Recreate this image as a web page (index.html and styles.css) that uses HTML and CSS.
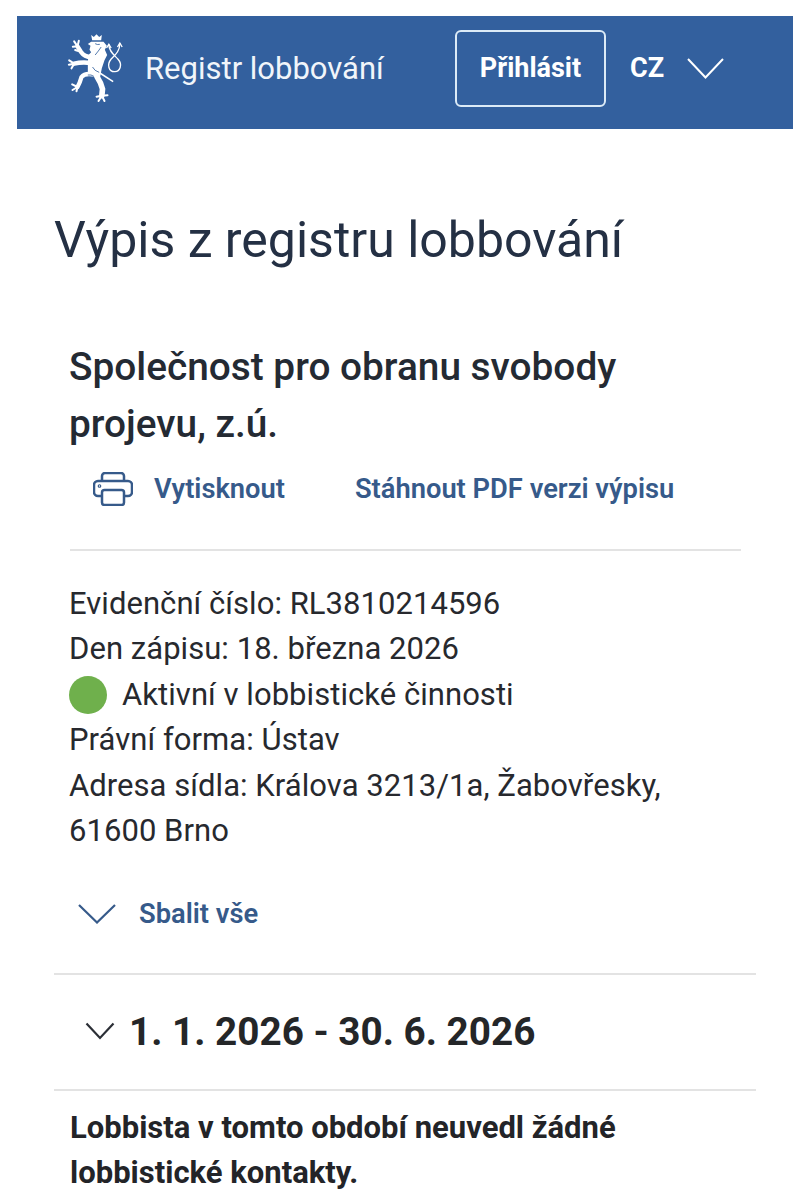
FILE: index.html
```html
<!DOCTYPE html>
<html lang="cs">
<head>
<meta charset="utf-8">
<title>Registr lobbování</title>
<link rel="stylesheet" href="styles.css">
</head>
<body>
<header class="topbar">
  <div class="brand">
    <svg class="lion" viewBox="200 100 170 210" aria-hidden="true">
      <path class="fillw" d="M272 106l8 6 8-8 8 8 8-6-2 16h-27z"/>
      <path class="fillw" d="M272 126l-10 7 8 5-3 12 5 8-8 8-2 20 0 36 36 14 6-30 8-24 8-16-7-16 6-12-10-12z"/>
      <g class="limb">
        <path d="M272 172Q252 172 241 156L231 140"/>
        <path d="M272 190Q244 186 221 192"/>
        <path d="M286 226Q254 218 243 232Q238 250 231 262"/>
        <path stroke-width="17" d="M290 232Q302 250 306 268L304 288"/>
      </g>
      <g class="claw">
        <path d="M231 140 221 125M231 140 235 123M231 140 217 141M241 156 224 151"/>
        <path d="M221 192 206 182M221 192 205 195M221 192 213 206"/>
        <path d="M231 262 215 254M231 262 216 271M231 262 228 275"/>
        <path d="M304 288 288 291M304 288 294 304M304 288 312 304M304 288 321 287"/>
      </g>
      <g class="tail">
        <path stroke-width="4.500" d="M298 220 338 246"/>
        <path d="M325 134C325 155 340 165 352 178C368 195 358 217 342 216C325 216 318 195 332 178C345 165 358 155 358 130"/>
        <path d="M318 145 325 134 332 145M351 142 358 130 365 142"/>
      </g>
      <path class="mark" d="M284 166Q294 154 302 142M276 202Q282 214 296 218M262 226Q272 224 280 230M284 132Q290 136 298 134"/>
    </svg>
    <span class="brand-name">Registr lobbování</span>
  </div>
  <a class="login">Přihlásit</a>
  <span class="lang">CZ</span>
  <svg class="lang-chevron" viewBox="0 0 37 21" aria-hidden="true"><path d="M1 1 18.500 19.500 36 1"/></svg>
</header>

<main class="page">
  <h1 class="title">Výpis z registru lobbování</h1>

  <section class="summary">
    <h2 class="org">Společnost pro obranu svobody<br>projevu, z.ú.</h2>
    <div class="actions">
      <a class="action print">
        <svg class="printer" viewBox="0 0 40 34" aria-hidden="true">
          <path d="M9 9V4a3 3 0 0 1 3-3h16a3 3 0 0 1 3 3v5"/>
          <path d="M9 24H5a4 4 0 0 1-4-4v-7a4 4 0 0 1 4-4h30a4 4 0 0 1 4 4v7a4 4 0 0 1-4 4h-4"/>
          <rect x="9" y="18" width="22" height="15" rx="2.500"/>
          <circle cx="6.500" cy="14" r="0.600"/>
        </svg>
        Vytisknout
      </a>
      <a class="action">Stáhnout PDF verzi výpisu</a>
    </div>
    <div class="details">
      <div>Evidenční číslo: RL3810214596</div>
      <div>Den zápisu: 18. března 2026</div>
      <div class="status"><span class="dot"></span>Aktivní v lobbistické činnosti</div>
      <div>Právní forma: Ústav</div>
      <div>Adresa sídla: Králova 3213/1a, Žabovřesky,<br>61600 Brno</div>
    </div>
    <a class="collapse">
      <svg class="collapse-chevron" viewBox="0 0 38 20" aria-hidden="true"><path d="M1 1 19 18.500 37 1"/></svg>
      Sbalit vše
    </a>
  </section>

  <section class="period">
    <svg class="period-chevron" viewBox="0 0 30 18" aria-hidden="true"><path d="M1.500 1.500 15 16 28.500 1.500"/></svg>
    <h2 class="period-title">1. 1. 2026 - 30. 6. 2026</h2>
  </section>

  <p class="notice">Lobbista v tomto období neuvedl žádné lobbistické kontakty.</p>
</main>
</body>
</html>
```
FILE: styles.css
```css
* { box-sizing: border-box; }
html, body { height: 1200px; overflow: hidden; }
body {
  margin: 0;
  padding-top: 16px;
  background: #fff;
  color: #242a33;
  font-family: Roboto, "Liberation Sans", sans-serif;
}
.topbar {
  display: flex;
  align-items: center;
  height: 113px;
  margin: 0 11px 0 17px;
  padding: 0 0 9px 50px;
  background: #33609e;
  color: #fff;
}
.brand { display: flex; align-items: center; width: 388px; }
.lion { width: 57px; height: 70px; margin-right: 21px; flex: none; }
.fillw { fill: #fff; }
.limb { fill: none; stroke: #fff; stroke-width: 13; stroke-linecap: round; }
.claw { fill: none; stroke: #fff; stroke-width: 6; stroke-linecap: round; }
.tail { fill: none; stroke: #fff; stroke-width: 4; }
.mark { fill: none; stroke: #33609e; stroke-width: 2.500; }
.brand-name { font-size: 31px; color: #f1f5fa; }
.login {
  display: flex;
  align-items: center;
  justify-content: center;
  width: 151px;
  height: 77px;
  border: 2px solid #dcebf7;
  border-radius: 6px;
  font-size: 27px;
  font-weight: 700;
}
.lang { margin-left: 24px; font-size: 27px; font-weight: 700; }
.lang-chevron { width: 37px; height: 21px; margin-left: 23px; fill: none; stroke: #fff; stroke-width: 2; }
.page { padding: 0 48px 0 54px; }
.title {
  margin: 79px 0 0;
  font-size: 50px;
  line-height: 64px;
  font-weight: 400;
  color: #243044;
}
.summary { padding: 0 15px 0 16px; }
.org {
  margin: 66px 0 0 -1px;
  font-size: 38.800px;
  line-height: 57px;
  font-weight: 500;
  color: #242a33;
}
.actions {
  display: flex;
  align-items: center;
  height: 99px;
  padding: 0 0 23px 23px;
  border-bottom: 2px solid #e3e3e3;
}
.action {
  display: flex;
  align-items: center;
  font-size: 27.300px;
  font-weight: 600;
  color: #365a8a;
}
.print { margin-right: 70px; }
.printer { width: 40px; height: 34px; margin-right: 21px; fill: none; stroke: #365a8a; stroke-width: 2.500; }
.details { margin: 30px 0 0 -1px; font-size: 31px; line-height: 45.400px; letter-spacing: 0.05px; color: #27292e; }
.status { display: flex; align-items: center; }
.dot {
  width: 38px;
  height: 38px;
  margin-right: 15px;
  border-radius: 50%;
  background: #6fb04c;
}
.collapse {
  display: flex;
  align-items: center;
  margin: 41px 0 0 8px;
  height: 40px;
  font-size: 27.300px;
  font-weight: 600;
  color: #365a8a;
}
.collapse-chevron { width: 38px; height: 20px; margin-right: 23px; fill: none; stroke: #365a8a; stroke-width: 2.200; }
.period {
  display: flex;
  align-items: center;
  height: 118px;
  margin-top: 39px;
  padding: 0 0 2px 31px;
  border-top: 2px solid #e3e3e3;
  border-bottom: 2px solid #e3e3e3;
}
.period-chevron { width: 30px; height: 18px; margin-right: 14px; fill: none; stroke: #2b2f36; stroke-width: 2.200; }
.period-title { margin: 0; font-size: 38.700px; font-weight: 700; color: #242628; }
.notice {
  margin: 14px 0 0 16px;
  font-size: 31px;
  line-height: 45px;
  font-weight: 700;
  width: 640px;
  color: #232428;
}
```
